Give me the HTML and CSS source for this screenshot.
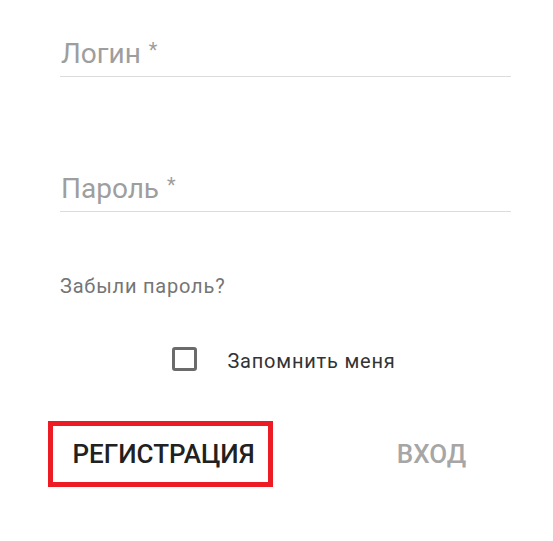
FILE: index.html
```html
<!DOCTYPE html>
<html lang="ru">
<head>
<meta charset="utf-8">
<title>Вход</title>
<link rel="stylesheet" href="styles.css">
</head>
<body>
<form class="form">
  <div class="field">
    <label class="label">Логин<span class="req">*</span></label>
  </div>
  <div class="field field-second">
    <label class="label">Пароль<span class="req">*</span></label>
  </div>
  <a class="forgot">Забыли пароль?</a>
  <div class="remember">
    <span class="checkbox"></span>
    <span class="remember-text">Запомнить меня</span>
  </div>
  <div class="actions">
    <button type="button" class="btn btn-register">РЕГИСТРАЦИЯ</button>
    <button type="button" class="btn btn-login">ВХОД</button>
  </div>
</form>
</body>
</html>
```
FILE: styles.css
```css
html, body {
  margin: 0;
  padding: 0;
  background: #ffffff;
}

body {
  font-family: Roboto, "Liberation Sans", sans-serif;
  width: 553px;
  height: 541px;
  overflow: hidden;
}

.form {
  display: flex;
  flex-direction: column;
  width: 451px;
  margin-left: 60px;
  padding-top: 38px;
}

.field {
  border-bottom: 1px solid #dcdcdc;
  padding-bottom: 6px;
}

.field-second {
  margin-top: 96px;
}

.label {
  display: block;
  font-size: 28px;
  line-height: 32px;
  color: #9e9e9e;
  padding-left: 1px;
}

.req {
  font-size: 20px;
  vertical-align: top;
  line-height: 20px;
  margin-left: 8px;
  position: relative;
  top: 2px;
}

.forgot {
  margin-top: 63px;
  font-size: 20px;
  line-height: 22px;
  letter-spacing: 0.8px;
  color: #757575;
}

.remember {
  margin-top: 50px;
  display: flex;
  justify-content: center;
  align-items: flex-start;
  gap: 30px;
  padding-right: 3px;
}

.checkbox {
  width: 19px;
  height: 18px;
  border: 3px solid #6b6b6b;
  border-radius: 3px;
}

.remember-text {
  font-size: 20px;
  line-height: 24px;
  letter-spacing: 0.8px;
  color: #333333;
  padding-top: 2px;
}

.actions {
  margin-top: 48px;
  margin-left: -12px;
  display: flex;
  align-items: flex-start;
}

.btn {
  font-family: Roboto, "Liberation Sans", sans-serif;
  font-weight: 500;
  font-size: 26px;
  line-height: 56px;
  background: transparent;
  padding: 0;
  margin: 0;
  width: 225px;
  height: 66px;
  flex-shrink: 0;
  display: flex;
  justify-content: center;
  align-items: center;
}

.btn-register {
  border: 5px solid #ed1c24;
  color: #212121;
  padding-left: 6px;
}

.btn-login {
  border: 5px solid transparent;
  color: #a6a6a6;
  margin-left: 46px;
}
```
